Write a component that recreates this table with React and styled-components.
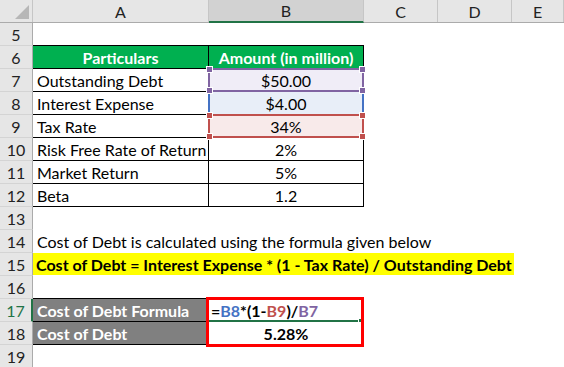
import React from "react";
import styled, { createGlobalStyle } from "styled-components";

const GlobalStyle = createGlobalStyle`
  body {
    margin: 0;
    background: #fff;
    font-family: Lato, "Liberation Sans", sans-serif;
  }
`;

const COLS = "33px 176px 155px 74px 74px 1fr";

const rows = [
  { n: 5 },
  { n: 6, kind: "head", a: "Particulars", b: "Amount (in million)" },
  { n: 7, kind: "data", a: "Outstanding Debt", b: "$50.00", mark: "purple" },
  { n: 8, kind: "data", a: "Interest Expense", b: "$4.00", mark: "blue" },
  { n: 9, kind: "data", a: "Tax Rate", b: "34%", mark: "red" },
  { n: 10, kind: "data", a: "Risk Free Rate of Return", b: "2%" },
  { n: 11, kind: "data", a: "Market Return", b: "5%" },
  { n: 12, kind: "data", a: "Beta", b: "1.2" },
  { n: 13 },
  { n: 14, kind: "note", text: "Cost of Debt is calculated using the formula given below" },
  { n: 15, kind: "yellow", text: "Cost of Debt = Interest Expense * (1 - Tax Rate) / Outstanding Debt" },
  { n: 16 },
  { n: 17, kind: "formula", a: "Cost of Debt Formula" },
  { n: 18, kind: "result", a: "Cost of Debt", b: "5.28%" },
  { n: 19 },
];

const marks = {
  purple: { line: "#8064a2", fill: "#f0edf7" },
  blue: { line: "#4472c4", fill: "#e8eef8" },
  red: { line: "#c0504d", fill: "#f8eaea" },
};

function App() {
  return (
    <>
      <GlobalStyle />
      <Sheet>
        <HeadRow>
          <Corner />
          {["A", "B", "C", "D", "E"].map((c) => (
            <ColHead key={c} $active={c === "B"}>{c}</ColHead>
          ))}
        </HeadRow>
        {rows.map((r) => (
          <Row key={r.n}>
            <RowHead $active={r.n === 17}>{r.n}</RowHead>
            {renderCells(r)}
          </Row>
        ))}
      </Sheet>
    </>
  );
}

function renderCells(r) {
  if (r.kind === "head") {
    return (
      <>
        <TableCell $top $bg="#00b050" $color="#fff" $bold $center>{r.a}</TableCell>
        <TableCell $top $bg="#00b050" $color="#fff" $bold $center>{r.b}</TableCell>
      </>
    );
  }
  if (r.kind === "data") {
    const m = marks[r.mark];
    return (
      <>
        <TableCell>{r.a}</TableCell>
        <TableCell $center $bg={m ? m.fill : "#fff"}>
          {r.b}
          {m && <Frame $color={m.line} $kind={r.mark}>
            <Handle $color={m.line} $x="left" $y="top" />
            <Handle $color={m.line} $x="right" $y="top" />
            <Handle $color={m.line} $x="left" $y="bottom" />
            <Handle $color={m.line} $x="right" $y="bottom" />
          </Frame>}
        </TableCell>
      </>
    );
  }
  if (r.kind === "note") {
    return <Text>{r.text}</Text>;
  }
  if (r.kind === "yellow") {
    return <Highlight>{r.text}</Highlight>;
  }
  if (r.kind === "formula") {
    return (
      <>
        <TableCell $top $bg="#808080" $color="#fff" $bold>{r.a}</TableCell>
        <TableCell $top $bold $tight>
          =<Ref $c="#4472c4">B8</Ref>*(1-<Ref $c="#c0504d">B9</Ref>)/<Ref $c="#8064a2">B7</Ref>
          <ActiveLine />
          <RedBox />
        </TableCell>
      </>
    );
  }
  if (r.kind === "result") {
    return (
      <>
        <TableCell $bg="#808080" $color="#fff" $bold>{r.a}</TableCell>
        <TableCell $bold $center>{r.b}</TableCell>
      </>
    );
  }
  return null;
}

const Sheet = styled.div`
  width: 564px;
  height: 367px;
  overflow: hidden;
  font-size: 16px;
  color: #000;
`;

const HeadRow = styled.div`
  display: grid;
  grid-template-columns: ${COLS};
  height: 23px;
  background: #e6e6e6;
  border-bottom: 1px solid #ababab;
  box-sizing: border-box;
`;

const Corner = styled.div`
  position: relative;
  border-right: 1px solid #c6c6c6;
  &::after {
    content: "";
    position: absolute;
    right: 3px;
    bottom: 3px;
    border-style: solid;
    border-width: 0 0 14px 14px;
    border-color: transparent transparent #b7b7b7 transparent;
  }
`;

const ColHead = styled.div`
  display: flex;
  align-items: center;
  justify-content: center;
  background: ${(p) => (p.$active ? "#d2d2d2" : "#e6e6e6")};
  border-right: 1px solid #c6c6c6;
  border-bottom: ${(p) => (p.$active ? "2px solid #217346" : "none")};
  margin-bottom: ${(p) => (p.$active ? "-1px" : "0")};
  color: #222;
  font-size: 16px;
`;

const Row = styled.div`
  display: grid;
  grid-template-columns: ${COLS};
  height: 23px;
`;

const RowHead = styled.div`
  display: flex;
  align-items: center;
  justify-content: center;
  background: #e6e6e6;
  border-bottom: 1px solid #d4d4d4;
  border-right: ${(p) => (p.$active ? "2px solid #217346" : "1px solid #ababab")};
  color: ${(p) => (p.$active ? "#217346" : "#222")};
  font-size: 16px;
  box-sizing: border-box;
`;

const TableCell = styled.div`
  position: relative;
  display: flex;
  align-items: center;
  justify-content: ${(p) => (p.$center ? "center" : "flex-start")};
  padding: 0 ${(p) => (p.$tight ? "2px" : "4px")};
  background: ${(p) => p.$bg || "#fff"};
  color: ${(p) => p.$color || "#000"};
  font-weight: ${(p) => (p.$bold ? 700 : 400)};
  border-right: 1px solid #000;
  border-bottom: 1px solid #000;
  border-top: ${(p) => (p.$top ? "1px solid #000" : "none")};
  margin-top: ${(p) => (p.$top ? "-1px" : "0")};
  height: ${(p) => (p.$top ? "24px" : "23px")};
  box-sizing: border-box;
  white-space: nowrap;
`;

const Frame = styled.div`
  position: absolute;
  inset: -1px;
  border: 2px solid ${(p) => p.$color};
  border-top-width: ${(p) => (p.$kind === "blue" ? 0 : "2px")};
  border-bottom-width: ${(p) => (p.$kind === "blue" ? 0 : "2px")};
  z-index: ${(p) => (p.$kind === "blue" ? 1 : 2)};
`;

const Handle = styled.span`
  position: absolute;
  ${(p) => p.$x}: -4px;
  ${(p) => p.$y}: -4px;
  width: 5px;
  height: 5px;
  background: ${(p) => p.$color};
  border: 1px solid #fff;
`;

const Text = styled.div`
  grid-column: 2 / span 4;
  display: flex;
  align-items: center;
  padding-left: 4px;
  white-space: nowrap;
`;

const Highlight = styled.div`
  grid-column: 2 / span 4;
  display: flex;
  align-items: center;
  padding-left: 3px;
  margin-right: -2px;
  background: #ffff00;
  font-weight: 700;
  white-space: nowrap;
  height: 22px;
`;

const Ref = styled.span`
  color: ${(p) => p.$c};
`;

const ActiveLine = styled.div`
  position: absolute;
  left: 0;
  right: 2px;
  bottom: -1px;
  height: 2px;
  background: #217346;
  &::after {
    content: "";
    position: absolute;
    right: -4px;
    top: -2px;
    width: 5px;
    height: 5px;
    background: #217346;
    border: 1px solid #fff;
  }
`;

const RedBox = styled.div`
  position: absolute;
  left: -3px;
  top: -2px;
  width: 158px;
  height: 50px;
  border: 3px solid #ff0000;
  box-sizing: border-box;
  z-index: 3;
`;

export default App;
